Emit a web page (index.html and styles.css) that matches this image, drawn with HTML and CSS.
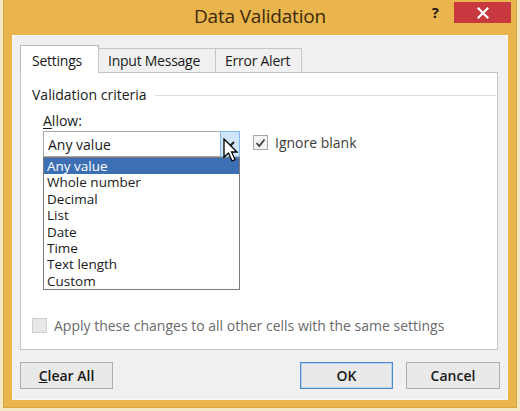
FILE: index.html
```html
<!DOCTYPE html>
<html>
<head>
<meta charset="utf-8">
<link rel="stylesheet" href="styles.css">
</head>
<body>
<div class="window">
  <div class="titlebar">
    <div class="tb-side"></div>
    <div class="title">Data Validation</div>
    <div class="tb-side tb-right">
      <span class="help">?</span>
      <span class="close"><svg width="12" height="12" viewBox="0 0 12 12"><path d="M1.5 1.5 L10.5 10.5 M10.5 1.5 L1.5 10.5" stroke="#fff" stroke-width="2.2" stroke-linecap="square"/></svg></span>
    </div>
  </div>
  <div class="client">
    <div class="tabs">
      <div class="tab active">Settings</div>
      <div class="tab">Input Message</div>
      <div class="tab">Error Alert</div>
    </div>
    <div class="panel">
      <div class="group-title"><span>Validation criteria</span><span class="rule"></span></div>
      <div class="field-label"><u>A</u>llow:</div>
      <div class="allow-row">
        <div class="combo-wrap">
          <div class="combo">
            <span class="combo-value">Any value</span>
            <span class="combo-btn"><svg width="10" height="7" viewBox="0 0 10 7"><path d="M1 1 L5 5 L9 1" fill="none" stroke="#222" stroke-width="2"/></svg></span>
          </div>
          <ul class="droplist">
            <li class="selected">Any value</li>
            <li>Whole number</li>
            <li>Decimal</li>
            <li>List</li>
            <li>Date</li>
            <li>Time</li>
            <li>Text length</li>
            <li>Custom</li>
          </ul>
          <svg class="cursor" width="16" height="25" viewBox="0 0 16 25"><path d="M1 1 L1 19 L5.5 15 L9 23 L12 21.6 L8.6 14 L14 14 Z" fill="#fff" stroke="#000" stroke-width="1.3" stroke-linejoin="miter"/></svg>
        </div>
        <div class="check">
          <span class="box checked"><svg width="11" height="10" viewBox="0 0 11 10"><path d="M1.5 5 L4.3 8 L9.5 1.5" fill="none" stroke="#444" stroke-width="1.8"/></svg></span>
          <span>Ignore blank</span>
        </div>
      </div>
      <div class="check apply">
        <span class="box disabled"></span>
        <span>Apply these changes to all other cells with the same settings</span>
      </div>
    </div>
    <div class="buttons">
      <div class="btn"><u>C</u>lear All</div>
      <div class="btn-group">
        <div class="btn default">OK</div>
        <div class="btn">Cancel</div>
      </div>
    </div>
  </div>
</div>
</body>
</html>
```
FILE: styles.css
```css
html, body {
  margin: 0;
  padding: 0;
}
body {
  width: 520px;
  height: 411px;
  background: #f7e9c6;
  font-family: "Open Sans", "Noto Sans", sans-serif;
  color: #1a1a1a;
  overflow: hidden;
}
.window {
  box-sizing: border-box;
  margin: 0 3px 0 3px;
  width: 514px;
  height: 408px;
  background: #eab54c;
  border: 1px solid #dba540;
  border-top: none;
  display: flex;
  flex-direction: column;
  padding: 0 8px 7px 8px;
}
.titlebar {
  height: 35px;
  display: grid;
  grid-template-columns: 1fr auto 1fr;
  align-items: start;
  flex: none;
}
.title {
  font-size: 19px;
  color: #3a2a0c;
  line-height: 33px;
  letter-spacing: -0.2px;
}
.tb-right {
  display: flex;
  justify-content: flex-end;
  align-items: flex-start;
  margin-right: -3px;
}
.help {
  font-weight: 700;
  font-size: 15px;
  color: #1f1a10;
  line-height: 15px;
  margin-top: 5px;
  margin-right: 15px;
}
.close {
  width: 57px;
  height: 21px;
  margin-top: 2px;
  background: #c8393f;
  display: flex;
  align-items: center;
  justify-content: center;
}
.client {
  flex: 1;
  background: #f0f0f0;
  border: 1px solid #f8f8f8;
  display: flex;
  flex-direction: column;
  padding: 9px 7px 0 7px;
}
.tabs {
  display: flex;
  align-items: flex-end;
  height: 27px;
  flex: none;
  position: relative;
  z-index: 1;
}
.tab {
  box-sizing: border-box;
  height: 24px;
  border: 1px solid #c6c6c6;
  border-bottom: none;
  background: #f0f0f0;
  font-size: 14px;
  letter-spacing: -0.25px;
  line-height: 23px;
  padding: 0 0 0 9px;
  margin-left: -1px;
  white-space: nowrap;
  overflow: hidden;
}
.tab:first-child { margin-left: 0; }
.tab.active {
  height: 28px;
  margin-bottom: -1px;
  background: #fff;
  padding-left: 11px;
  line-height: 29px;
  border-color: #b9b9b9;
  width: 79px;
}
.tab:nth-child(2) { width: 118px; }
.tab:nth-child(3) { width: 87px; }
.panel {
  flex: 1;
  background: #fff;
  border: 1px solid #c4c4c4;
  margin-right: 2px;
  display: flex;
  flex-direction: column;
  padding: 0 0 0 11px;
}
.group-title {
  display: flex;
  align-items: center;
  margin-top: 12px;
  font-size: 14px;
  line-height: 20px;
  padding-right: 1px;
}
.rule {
  flex: 1;
  height: 1px;
  background: #dedede;
  margin-left: 8px;
}
.field-label {
  font-size: 14px;
  line-height: 18px;
  margin: 7px 0 0 11px;
}
.field-label u { text-underline-offset: 2px; }
.allow-row {
  display: flex;
  align-items: flex-start;
  margin: 1px 0 0 11px;
}
.combo-wrap {
  position: relative;
  width: 197px;
}
.combo {
  box-sizing: border-box;
  height: 26px;
  border: 1px solid #a9a9a9;
  display: flex;
  align-items: center;
  justify-content: space-between;
  background: #fff;
}
.combo-value {
  font-size: 14px;
  padding-left: 4px;
}
.combo-btn {
  box-sizing: border-box;
  width: 20px;
  height: 26px;
  margin: -1px -1px -1px 0;
  background: #cfe5f9;
  border: 1px solid #84b7ea;
  display: flex;
  align-items: center;
  justify-content: center;
}
.droplist {
  position: absolute;
  left: 0;
  top: 26px;
  box-sizing: border-box;
  width: 197px;
  margin: 0;
  padding: 0;
  list-style: none;
  border: 1px solid #7a7a7a;
  background: #fff;
  z-index: 2;
}
.droplist li {
  font-size: 13.5px;
  height: 16.4px;
  line-height: 16.4px;
  padding-left: 3px;
  overflow: hidden;
}
.droplist li.selected {
  background: #3d6fb4;
  color: #fff;
}
.cursor {
  position: absolute;
  left: 180px;
  top: 7px;
  z-index: 3;
}
.check {
  display: flex;
  align-items: center;
  font-size: 14px;
  color: #3c3c3c;
}
.allow-row .check {
  margin: 2px 0 0 13px;
}
.box {
  box-sizing: border-box;
  width: 15px;
  height: 15px;
  border: 1px solid #a8a8a8;
  background: #f4f4f4;
  margin-right: 7px;
  display: flex;
  align-items: center;
  justify-content: center;
}
.box.disabled {
  background: #e8e8e8;
  border-color: #cfcfcf;
}
.check.apply {
  margin-top: auto;
  margin-bottom: 14px;
  color: #6a6a6a;
}
.buttons {
  flex: none;
  display: flex;
  justify-content: space-between;
  padding: 12px 0 10px 0;
}
.btn-group {
  display: flex;
  gap: 13px;
}
.btn {
  box-sizing: border-box;
  width: 93px;
  height: 27px;
  border: 1px solid #adadad;
  background: #e9e9e9;
  font-size: 14px;
  font-weight: 600;
  display: flex;
  align-items: center;
  justify-content: center;
}
.btn.default {
  border-color: #4a8ad0;
  box-shadow: inset 0 0 0 1px #b7d3ef;
}
.btn-group .btn:last-child { width: 94px; }
```
